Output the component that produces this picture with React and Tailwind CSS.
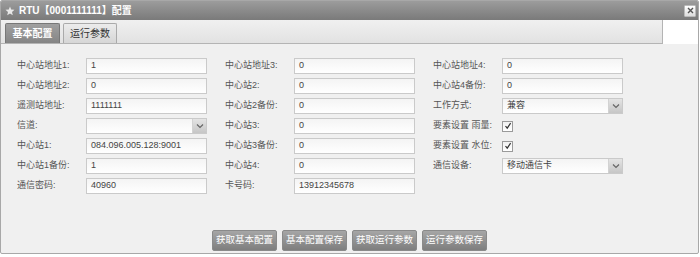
import { useState } from 'react';

const col1 = [
    { label: '中心站地址1:', value: '1' },
    { label: '中心站地址2:', value: '0' },
    { label: '遥测站地址:', value: '1111111' },
    { label: '信道:', value: '', select: true },
    { label: '中心站1:', value: '084.096.005.128:9001' },
    { label: '中心站1备份:', value: '1' },
    { label: '通信密码:', value: '40960' },
];

const col2 = [
    { label: '中心站地址3:', value: '0' },
    { label: '中心站2:', value: '0' },
    { label: '中心站2备份:', value: '0' },
    { label: '中心站3:', value: '0' },
    { label: '中心站3备份:', value: '0' },
    { label: '中心站4:', value: '0' },
    { label: '卡号码:', value: '13912345678' },
];

const col3 = [
    { label: '中心站地址4:', value: '0' },
    { label: '中心站4备份:', value: '0' },
    { label: '工作方式:', value: '兼容', select: true },
    { label: '要素设置 雨量:', check: true },
    { label: '要素设置 水位:', check: true },
    { label: '通信设备:', value: '移动通信卡', select: true },
];

function Chevron() {
    return (
        <svg width="8" height="6" viewBox="0 0 8 6">
            <path d="M1 1.5 L4 4.5 L7 1.5" stroke="#666" strokeWidth="1.2" fill="none" />
        </svg>
    );
}

function Field({ item }) {
    return (
        <div className="flex items-center h-[16px]">
            <span className="w-[69px] shrink-0 text-[#555] whitespace-nowrap">{item.label}</span>
            {item.check ? (
                <span className="w-[11px] h-[11px] border border-[#9a9a9a] bg-gradient-to-b from-[#f2f2f2] to-white flex items-center justify-center">
                    <svg width="8" height="8" viewBox="0 0 8 8">
                        <path d="M1.5 4 L3.2 6.2 L6.6 1.2" stroke="#333" strokeWidth="1.2" fill="none" />
                    </svg>
                </span>
            ) : (
                <div className="w-[121px] h-[16px] border border-[#cacaca] bg-gradient-to-b from-[#f4f4f4] to-white flex items-center">
                    <span className="flex-1 pl-[4px] text-[#444] whitespace-nowrap">{item.value}</span>
                    {item.select && (
                        <span className="w-[14px] h-full bg-gradient-to-b from-[#e4e4e4] to-[#c6c6c6] border-l border-[#d2d2d2] flex items-center justify-center">
                            <Chevron />
                        </span>
                    )}
                </div>
            )}
        </div>
    );
}

function Column({ items }) {
    return (
        <div className="w-[208px] flex flex-col gap-[4px]">
            {items.map((it) => (
                <Field key={it.label} item={it} />
            ))}
        </div>
    );
}

export default function App() {
    const [tab, setTab] = useState(0);
    const tabs = ['基本配置', '运行参数'];
    const buttons = ['获取基本配置', '基本配置保存', '获取运行参数', '运行参数保存'];

    return (
        <div className="w-[700px] h-[257px] bg-white font-['Liberation_Sans','Noto_Sans_CJK_SC',sans-serif] text-[9px]">
            <div className="w-[699px] h-[254px] border border-[#a8a8a8] rounded-[2px] flex flex-col overflow-hidden bg-[#f0f0f0]">
                {/* title */}
                <div className="h-[19px] shrink-0 bg-gradient-to-b from-[#9c9c9c] to-[#7a7a7a] flex items-center pl-[4px] pr-[2px]">
                    <svg width="10" height="10" viewBox="0 0 10 10">
                        <path d="M5 0.5 L6.2 3.6 L9.5 3.8 L7 5.9 L7.8 9.3 L5 7.5 L2.2 9.3 L3 5.9 L0.5 3.8 L3.8 3.6 Z" fill="#e8e8e8" />
                    </svg>
                    <span className="ml-[4px] text-white font-bold text-[10px]">RTU【0001111111】配置</span>
                    <span className="ml-auto w-[12px] h-[12px] bg-gradient-to-b from-white to-[#ddd] border border-[#bbb] rounded-[1px] flex items-center justify-center">
                        <svg width="7" height="7" viewBox="0 0 7 7">
                            <path d="M1 1 L6 6 M6 1 L1 6" stroke="#555" strokeWidth="1.4" />
                        </svg>
                    </span>
                </div>
                {/* tabs */}
                <div className="h-[24px] shrink-0 flex bg-white">
                    <div className="w-[662px] bg-gradient-to-b from-[#f0f0f0] to-[#e2e2e2] border-r border-b border-[#b4b4b4] flex items-end pl-[4px] gap-[3px]">
                        {tabs.map((t, i) => (
                            <button
                                key={t}
                                onClick={() => setTab(i)}
                                className={`h-[20px] px-[6px] border border-b-0 rounded-t-[2px] text-[10px] ${
                                    tab === i
                                        ? 'bg-gradient-to-b from-[#a0a0a0] to-[#858585] border-[#777] text-white font-bold w-[55px]'
                                        : 'bg-gradient-to-b from-[#ececec] to-[#d6d6d6] border-[#aaa] text-[#333] w-[54px]'
                                }`}
                            >
                                {t}
                            </button>
                        ))}
                    </div>
                </div>
                {/* content */}
                <div className="flex-1 flex flex-col">
                    <div className="flex pl-[16px] pt-[14px]">
                        <Column items={col1} />
                        <Column items={col2} />
                        <Column items={col3} />
                    </div>
                    <div className="mt-auto mb-[2px] flex justify-center gap-[5px]">
                        {buttons.map((b) => (
                            <button
                                key={b}
                                className="h-[21px] px-[3px] border border-[#8a8a8a] rounded-[2px] bg-gradient-to-b from-[#a6a6a6] to-[#7e7e7e] text-white text-[9.5px] whitespace-nowrap"
                            >
                                {b}
                            </button>
                        ))}
                    </div>
                </div>
            </div>
        </div>
    );
}
